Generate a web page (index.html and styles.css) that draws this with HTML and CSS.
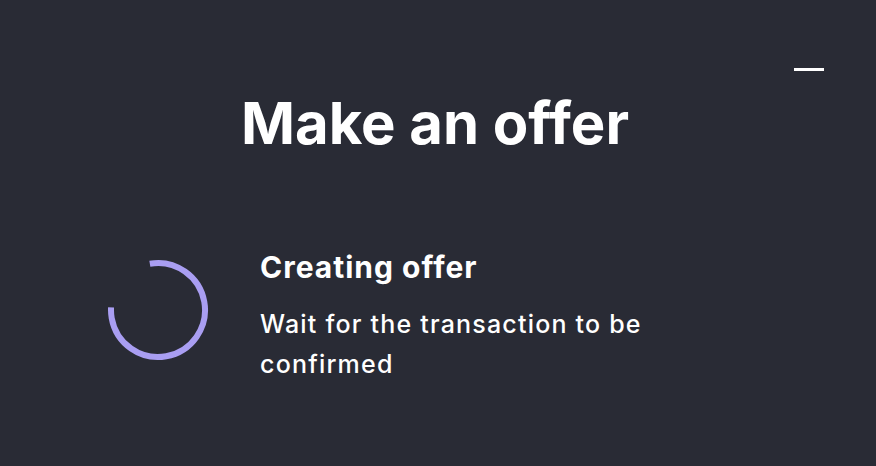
FILE: index.html
```html
<!DOCTYPE html>
<html>
<head>
    <title>Make an offer</title>
    <link rel="stylesheet" href="styles.css">
</head>
<body>
    <div class="modal">
        <div class="modal-top">
            <button class="minimize" aria-label="Minimize"></button>
        </div>
        <h1 class="modal-title">Make an offer</h1>
        <div class="step">
            <svg class="spinner" width="104" height="104" viewBox="0 0 104 104">
                <circle cx="52" cy="52" r="47" fill="none" stroke="#a99ef2" stroke-width="6"
                        stroke-dasharray="232 295.3" transform="rotate(-100 52 52)"/>
            </svg>
            <div class="step-text">
                <h2>Creating offer</h2>
                <p>Wait for the transaction to be confirmed</p>
            </div>
        </div>
    </div>
</body>
</html>
```

FILE: styles.css
```css
body {
    margin: 0;
    background-color: #292b35;
    font-family: Inter, "Noto Sans", sans-serif;
    color: #ffffff;
}
.modal {
    width: 876px;
    height: 466px;
    box-sizing: border-box;
    padding: 0 52px;
}
.modal-top {
    display: flex;
    justify-content: flex-end;
    padding-top: 68px;
}
.minimize {
    width: 30px;
    height: 3px;
    padding: 0;
    border: none;
    background-color: #ffffff;
}
.modal-title {
    margin: 17px 6px 0 0;
    text-align: center;
    font-size: 58px;
    font-weight: 700;
    line-height: 70px;
}
.step {
    display: flex;
    align-items: flex-start;
    margin-top: 89px;
    padding-left: 54px;
}
.spinner {
    flex-shrink: 0;
    margin-top: 11px;
}
.step-text {
    margin-left: 50px;
    width: 420px;
}
.step-text h2 {
    margin: 0;
    font-size: 30px;
    font-weight: 700;
    letter-spacing: 1px;
    line-height: 40px;
}
.step-text p {
    margin: 17px 0 0 0;
    font-size: 25px;
    font-weight: 500;
    letter-spacing: 1.2px;
    line-height: 40px;
}
```
